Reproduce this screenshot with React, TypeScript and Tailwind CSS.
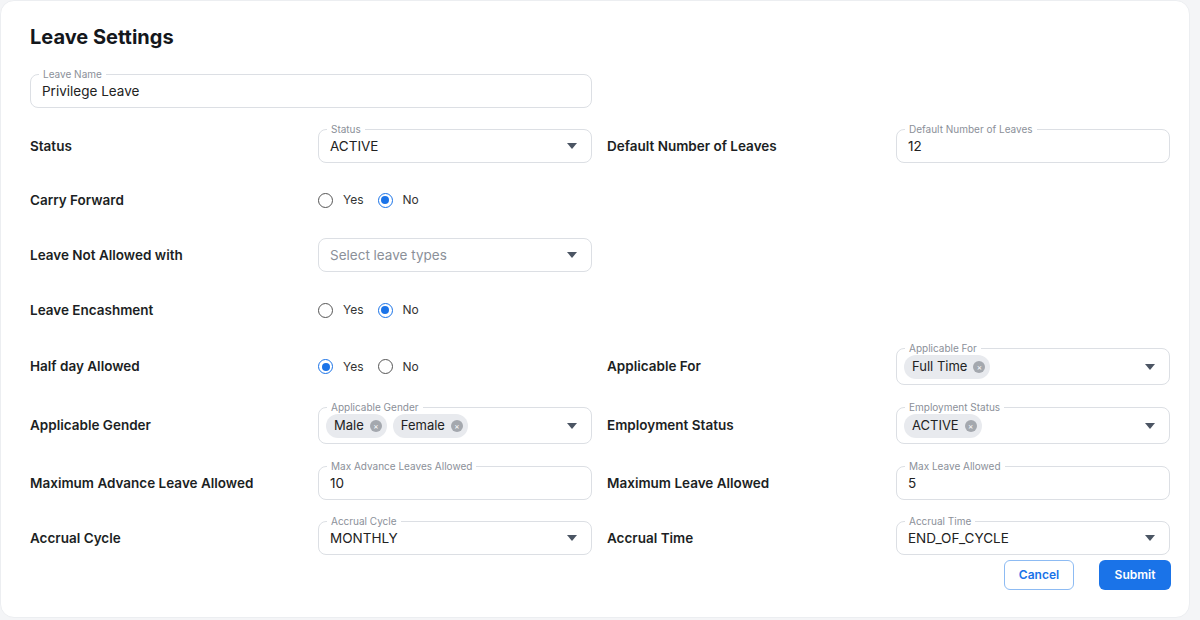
import React from "react";

const Caret = () => (
  <svg width="10" height="6" viewBox="0 0 10 6" className="absolute right-[14px] top-1/2 -translate-y-1/2">
    <path d="M0 0h10L5 6z" fill="#4b5563" />
  </svg>
);

const Field = ({ label, value, select, placeholder, chips, tall }: { label?: string; value?: string; select?: boolean; placeholder?: string; chips?: string[]; tall?: boolean }) => (
  <div className={`relative w-full ${tall ? "h-[37px]" : "h-[34px]"} rounded-[8px] border border-[#dcdfe4] bg-white flex items-center px-[11px]`}>
    {label && (
      <span className="absolute -top-[8px] left-[8px] bg-white px-[4px] text-[10px] leading-[14px] text-[#8b9099]">{label}</span>
    )}
    {chips ? (
      <div className="flex gap-[6px] -ml-[4px]">
        {chips.map((c) => (
          <span key={c} className="flex items-center gap-[6px] rounded-full bg-[#e8eaee] h-[24px] pl-[8px] pr-[5px] text-[13px] text-[#222]">
            {c}
            <span className="w-[12px] h-[12px] rounded-full bg-[#a4a8ae] flex items-center justify-center text-white text-[8px] leading-none">×</span>
          </span>
        ))}
      </div>
    ) : (
      <span className={`text-[13.5px] ${placeholder ? "text-[#8b9099]" : "text-[#222]"}`}>{value ?? placeholder}</span>
    )}
    {select && <Caret />}
  </div>
);

const Radio = ({ on, label }: { on?: boolean; label: string }) => (
  <span className="flex items-center gap-[10px] text-[12px] text-[#333]">
    <span className={`w-[15px] h-[15px] rounded-full border ${on ? "border-[#1a73e8]" : "border-[#555]"} flex items-center justify-center`}>
      {on && <span className="w-[8px] h-[8px] rounded-full bg-[#1a73e8]" />}
    </span>
    {label}
  </span>
);

const Label = ({ children }: { children: React.ReactNode }) => (
  <div className="text-[13.5px] font-semibold text-[#1c1f24]">{children}</div>
);

const Row = ({ mt, h, children }: { mt: string; h: string; children: React.ReactNode }) => (
  <div className={`grid grid-cols-[288px_274px_15px_289px_274px] items-center ${mt} ${h}`}>{children}</div>
);

export default function App() {
  return (
    <div className="w-[1200px] h-[620px] bg-[#f4f5f7] p-0" style={{ fontFamily: "Inter, 'Open Sans', sans-serif" }}>
      <div className="w-[1190px] h-[618px] bg-white rounded-[14px] border border-[#eceef1] pl-[29px] pt-[22px]">
        <h1 className="text-[20px] font-bold text-[#14171c] leading-[28px]">Leave Settings</h1>
        <div className="mt-[23px] w-[562px]">
          <Field label="Leave Name" value="Privilege Leave" />
        </div>
        <Row mt="mt-[21px]" h="h-[34px]">
          <Label>Status</Label>
          <Field label="Status" value="ACTIVE" select />
          <div />
          <Label>Default Number of Leaves</Label>
          <Field label="Default Number of Leaves" value="12" />
        </Row>
        <Row mt="mt-[20px]" h="h-[34px]">
          <Label>Carry Forward</Label>
          <div className="flex gap-[14px]"><Radio label="Yes" /><Radio on label="No" /></div>
        </Row>
        <Row mt="mt-[21px]" h="h-[34px]">
          <Label>Leave Not Allowed with</Label>
          <Field placeholder="Select leave types" select />
        </Row>
        <Row mt="mt-[21px]" h="h-[34px]">
          <Label>Leave Encashment</Label>
          <div className="flex gap-[14px]"><Radio label="Yes" /><Radio on label="No" /></div>
        </Row>
        <Row mt="mt-[21px]" h="h-[37px]">
          <Label>Half day Allowed</Label>
          <div className="flex gap-[14px]"><Radio on label="Yes" /><Radio label="No" /></div>
          <div />
          <Label>Applicable For</Label>
          <Field label="Applicable For" chips={["Full Time"]} select tall />
        </Row>
        <Row mt="mt-[22px]" h="h-[37px]">
          <Label>Applicable Gender</Label>
          <Field label="Applicable Gender" chips={["Male", "Female"]} select tall />
          <div />
          <Label>Employment Status</Label>
          <Field label="Employment Status" chips={["ACTIVE"]} select tall />
        </Row>
        <Row mt="mt-[22px]" h="h-[34px]">
          <Label>Maximum Advance Leave Allowed</Label>
          <Field label="Max Advance Leaves Allowed" value="10" />
          <div />
          <Label>Maximum Leave Allowed</Label>
          <Field label="Max Leave Allowed" value="5" />
        </Row>
        <Row mt="mt-[21px]" h="h-[34px]">
          <Label>Accrual Cycle</Label>
          <Field label="Accrual Cycle" value="MONTHLY" select />
          <div />
          <Label>Accrual Time</Label>
          <Field label="Accrual Time" value="END_OF_CYCLE" select />
        </Row>
        <div className="mt-[5px] w-[1141px] flex justify-end gap-[25px]">
          <button className="w-[70px] h-[30px] rounded-[6px] border border-[#8dbbf3] text-[#1a73e8] text-[12px] font-semibold">Cancel</button>
          <button className="w-[72px] h-[30px] rounded-[6px] bg-[#1a73e8] text-white text-[12px] font-semibold">Submit</button>
        </div>
      </div>
    </div>
  );
}
